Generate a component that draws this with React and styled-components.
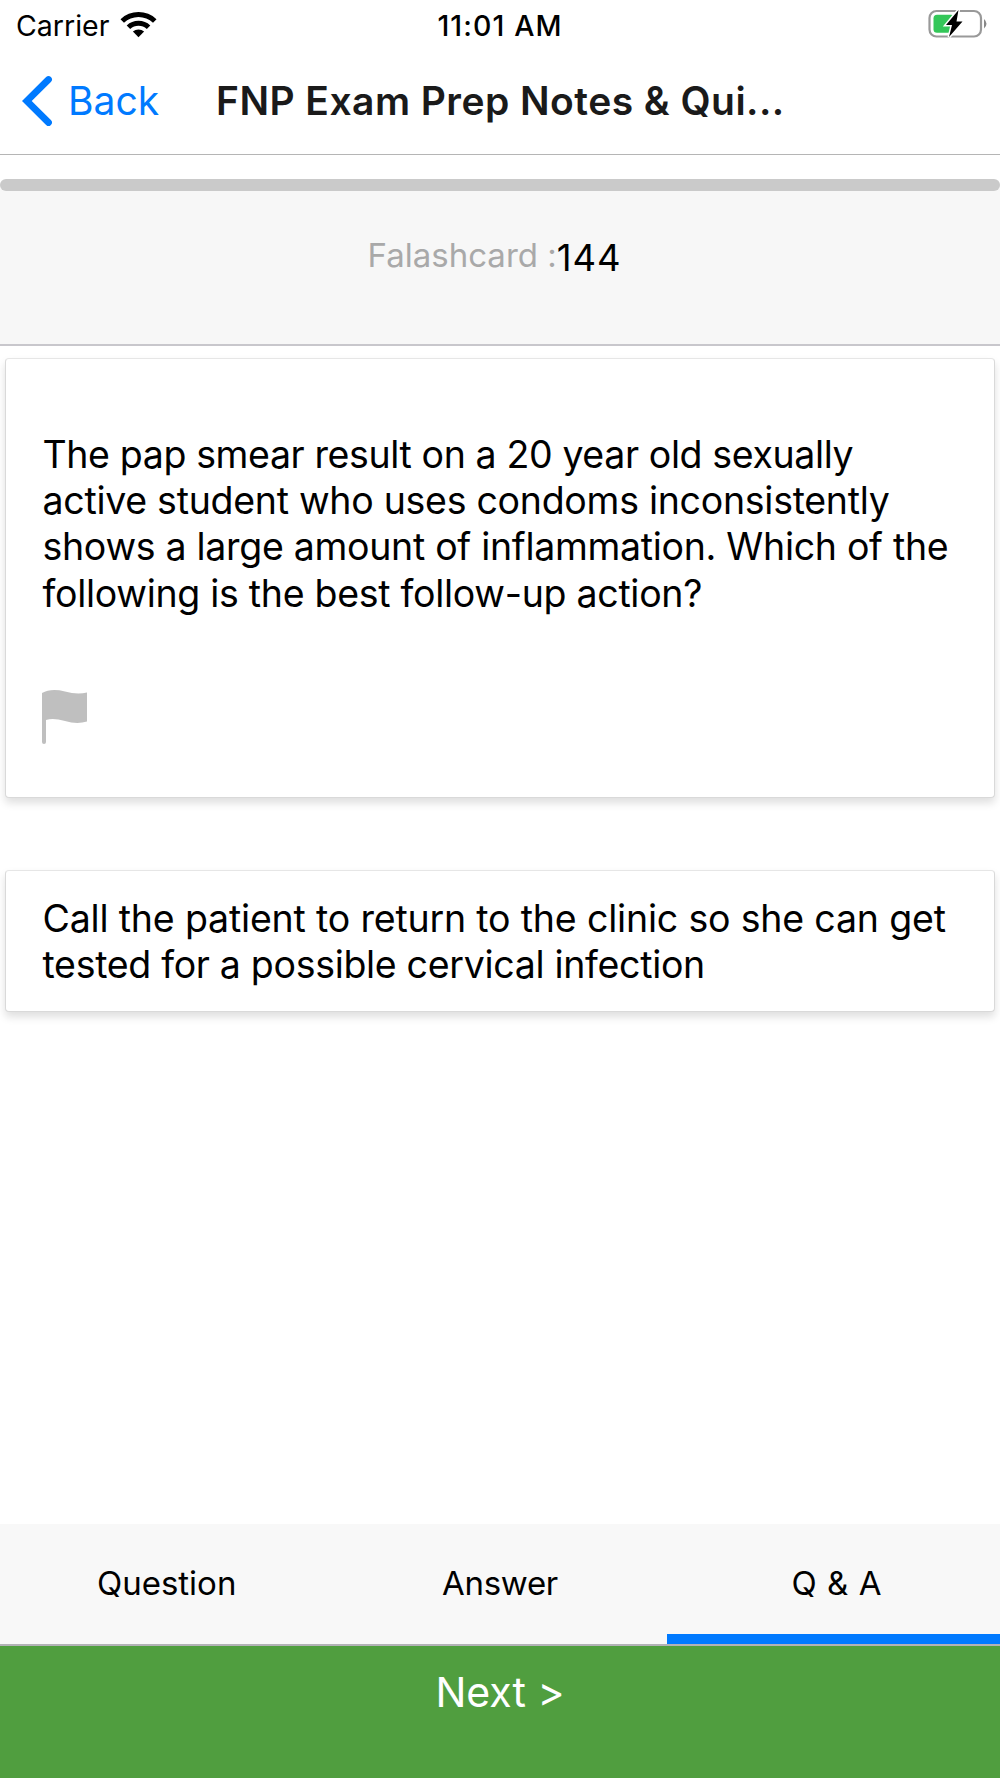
import React, { Component } from 'react';
import styled, { createGlobalStyle } from 'styled-components';

const GlobalStyle = createGlobalStyle`
  body {
    margin: 0;
    background: white;
  }
  * {
    box-sizing: border-box;
  }
`

const Screen = styled.div`
  display: flex;
  flex-direction: column;
  width: 1000px;
  height: 1778px;
  font-family: Inter, 'Liberation Sans', sans-serif;
  color: black;
  white-space: nowrap;
  overflow: hidden;
`

const StatusBar = styled.div`
  display: grid;
  grid-template-columns: 1fr auto 1fr;
  align-items: center;
  height: 51px;
  padding: 0 13px;
  font-size: 28.5px;
  line-height: 51px;
`

const Carrier = styled.div`
  display: flex;
  align-items: center;
  gap: 11px;
  padding-left: 3px;

  svg {
    margin-bottom: 3px;
  }
`

const Time = styled.span`
  font-size: 28.5px;
  font-weight: 500;
  letter-spacing: 1.1px;
`

const Battery = styled.svg`
  justify-self: end;
  margin-bottom: 3px;
`

const NavBar = styled.div`
  display: flex;
  align-items: center;
  height: 104px;
  padding: 0 0 4px 22px;
  border-bottom: 1px solid #b5b5b5;
`

const BackButton = styled.button`
  display: flex;
  align-items: center;
  gap: 14px;
  width: 194px;
  padding: 0;
  border: none;
  background: none;
  color: #007aff;
  font-family: inherit;
  font-size: 39px;
`

const Title = styled.h1`
  margin: 0;
  color: #1a1a1a;
  font-size: 39px;
  font-weight: 600;
  letter-spacing: 0.46px;
`

const Progress = styled.div`
  height: 36px;
  padding-top: 24px;
  background: linear-gradient(white 30px, #f7f7f7 30px);
`

const Track = styled.div`
  height: 12px;
  border-radius: 6px;
  background: #cacaca;
`

const Counter = styled.div`
  display: flex;
  align-items: baseline;
  justify-content: center;
  height: 155px;
  padding: 43px 11px 0 0;
  border-bottom: 2px solid #c8c7cc;
  background: #f7f7f7;
`

const CounterLabel = styled.span`
  color: #a9a9a9;
  font-size: 33px;
  line-height: 40px;
`

const CounterValue = styled.span`
  position: relative;
  top: 4px;
  font-size: 36.5px;
  line-height: 40px;
  letter-spacing: 0.9px;
`

const Content = styled.div`
  display: flex;
  flex-direction: column;
  flex: 1;
  gap: 72px;
  padding: 12px 5px 0;
`

const Card = styled.div`
  height: ${props => props.height}px;
  padding: ${props => props.top}px 36px 0;
  border: 1px solid #d9d9d9;
  border-top-color: #e6e6e6;
  border-radius: 4px;
  background: white;
  box-shadow: 0 5px 8px rgba(0, 0, 0, 0.13);
`

const Line = styled.span`
  display: block;
  padding-left: 0.5px;
  font-size: 37.5px;
  line-height: 46.2px;
  letter-spacing: ${props => props.$spacing}px;
`

const Flag = styled.svg`
  display: block;
  margin: 72px 0 0 -1px;
`

const Tabs = styled.div`
  display: grid;
  grid-template-columns: repeat(3, 1fr);
  height: 122px;
  border-bottom: 2px solid #b2b2b6;
  background: #f8f8f8;
`

const Tab = styled.button`
  padding: 8px 0 ${props => (props.$active ? 0 : 10)}px ${props => props.$indent}px;
  border: none;
  border-bottom: ${props => (props.$active ? '10px solid #007aff' : 'none')};
  background: none;
  color: black;
  font-family: inherit;
  font-size: 33px;
  line-height: 102px;
  letter-spacing: ${props => props.$spacing}px;
`

const NextButton = styled.button`
  height: 132px;
  padding: 0 0 40px;
  border: none;
  background: #509e3f;
  color: white;
  font-family: inherit;
  font-size: 41px;
`

const question = [
  { text: 'The pap smear result on a 20 year old sexually', spacing: -0.38 },
  { text: 'active student who uses condoms inconsistently', spacing: -0.28 },
  { text: 'shows a large amount of inflammation. Which of the', spacing: -0.3 },
  { text: 'following is the best follow-up action?', spacing: -0.29 }
];

const answer = [
  { text: 'Call the patient to return to the clinic so she can get', spacing: -0.18 },
  { text: 'tested for a possible cervical infection', spacing: -0.31 }
];

const tabs = [
  { name: 'Question', spacing: 0, indent: 0 },
  { name: 'Answer', spacing: -0.3, indent: 0 },
  { name: 'Q & A', spacing: 0.6, indent: 7 }
];

const Lines = ({ lines }) => lines.map(line => (
  <Line key={line.text} $spacing={line.spacing}>{line.text}</Line>
));

class App extends Component {
  constructor(props) {
    super(props);

    this.state = {
      tab: 'Q & A'
    };
  }

  render() {
    return (
      <Screen>
        <GlobalStyle />
        <StatusBar>
          <Carrier>
            Carrier
            <svg width="37" height="27" viewBox="0 0 37 27">
              <path d="M0.5 8.2 A26 26 0 0 1 36.5 8.2 L33 11.7 A21 21 0 0 0 4 11.7 Z" />
              <path d="M6.7 14.4 A17.3 17.3 0 0 1 30.3 14.4 L26.8 17.9 A12.3 12.3 0 0 0 10.2 17.9 Z" />
              <path d="M12.9 20.6 A8.6 8.6 0 0 1 24.1 20.6 L18.5 26.3 Z" />
            </svg>
          </Carrier>
          <Time>11:01 AM</Time>
          <Battery width="60" height="30" viewBox="0 0 60 30">
            <rect x="2.5" y="2" width="51.5" height="25.5" rx="7" fill="none" stroke="#999" strokeWidth="2.2" />
            <path d="M57 10 Q62 14.7 57 19.5 Z" fill="#888" />
            <rect x="6.5" y="5.8" width="21" height="18" rx="3.5" fill="#34c759" />
            <path d="M31.5 1 L19 16 H25 L22 28 L35.5 12.5 H29.5 Z" fill="black" stroke="white" strokeWidth="3" paintOrder="stroke" />
          </Battery>
        </StatusBar>
        <NavBar>
          <BackButton>
            <svg width="32" height="52" viewBox="0 0 32 52">
              <path d="M26.5 4.5 L4.8 26 L26.5 47.5" fill="none" stroke="#007aff" strokeWidth="6.8" strokeLinecap="round" />
            </svg>
            Back
          </BackButton>
          <Title>FNP Exam Prep Notes &amp; Qui...</Title>
        </NavBar>
        <Progress>
          <Track />
        </Progress>
        <Counter>
          <CounterLabel>Falashcard :</CounterLabel>
          <CounterValue>144</CounterValue>
        </Counter>
        <Content>
          <Card height={440} top={73}>
            <Lines lines={question} />
            <Flag width="48" height="56" viewBox="0 0 48 56">
              <path d="M1 4 Q10 -1 24 2.5 Q36 6 46 3.5 V32.5 Q36 35.5 24 32 Q12 28.5 5 31 V53 Q5 55 3 55 Q1 55 1 53 Z" fill="#bfbfbf" />
            </Flag>
          </Card>
          <Card height={142} top={25}>
            <Lines lines={answer} />
          </Card>
        </Content>
        <Tabs>
          {tabs.map(tab => (
            <Tab
              key={tab.name}
              $active={tab.name === this.state.tab}
              $spacing={tab.spacing}
              $indent={tab.indent}
              onClick={() => this.setState({ tab: tab.name })}
            >
              {tab.name}
            </Tab>
          ))}
        </Tabs>
        <NextButton>Next &gt;</NextButton>
      </Screen>
    );
  }
}

export default App;
